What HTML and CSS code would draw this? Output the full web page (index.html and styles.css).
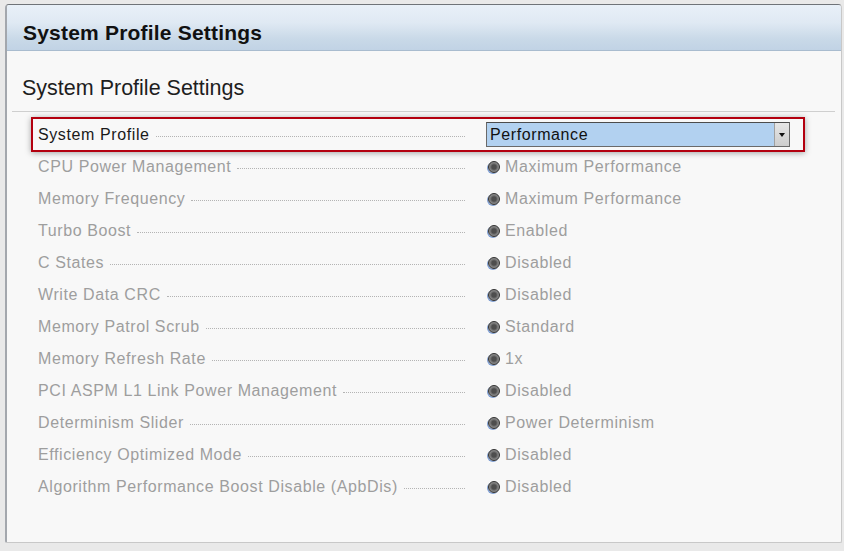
FILE: index.html
```html
<!DOCTYPE html>
<html lang="en">
<head>
  <meta charset="UTF-8" />
  <title>System Profile Settings</title>
  <link rel="stylesheet" href="styles.css">
</head>
<body>

<div class="panel">
  <div class="panel-header">System Profile Settings</div>

  <div class="panel-body">
    <h2 class="section-title">System Profile Settings</h2>
    <div class="divider"></div>

    <div class="settings">
      <div class="row selected">
        <div class="label"><span>System Profile</span><span class="dots"></span></div>
        <div class="value">
          <div class="select">
            <span class="select-text">Performance</span>
            <span class="select-btn"><span class="arrow"></span></span>
          </div>
        </div>
      </div>

      <div class="row">
        <div class="label"><span>CPU Power Management</span><span class="dots"></span></div>
        <div class="value"><span class="radio"></span>Maximum Performance</div>
      </div>
      <div class="row">
        <div class="label"><span>Memory Frequency</span><span class="dots"></span></div>
        <div class="value"><span class="radio"></span>Maximum Performance</div>
      </div>
      <div class="row">
        <div class="label"><span>Turbo Boost</span><span class="dots"></span></div>
        <div class="value"><span class="radio"></span>Enabled</div>
      </div>
      <div class="row">
        <div class="label"><span>C States</span><span class="dots"></span></div>
        <div class="value"><span class="radio"></span>Disabled</div>
      </div>
      <div class="row">
        <div class="label"><span>Write Data CRC</span><span class="dots"></span></div>
        <div class="value"><span class="radio"></span>Disabled</div>
      </div>
      <div class="row">
        <div class="label"><span>Memory Patrol Scrub</span><span class="dots"></span></div>
        <div class="value"><span class="radio"></span>Standard</div>
      </div>
      <div class="row">
        <div class="label"><span>Memory Refresh Rate</span><span class="dots"></span></div>
        <div class="value"><span class="radio"></span>1x</div>
      </div>
      <div class="row">
        <div class="label"><span>PCI ASPM L1 Link Power Management</span><span class="dots"></span></div>
        <div class="value"><span class="radio"></span>Disabled</div>
      </div>
      <div class="row">
        <div class="label"><span>Determinism Slider</span><span class="dots"></span></div>
        <div class="value"><span class="radio"></span>Power Determinism</div>
      </div>
      <div class="row">
        <div class="label"><span>Efficiency Optimized Mode</span><span class="dots"></span></div>
        <div class="value"><span class="radio"></span>Disabled</div>
      </div>
      <div class="row">
        <div class="label"><span>Algorithm Performance Boost Disable (ApbDis)</span><span class="dots"></span></div>
        <div class="value"><span class="radio"></span>Disabled</div>
      </div>
    </div>
  </div>
</div>

</body>
</html>
```

FILE: styles.css
```css
body {
  margin: 0;
  font-family: "Liberation Sans", Arial, sans-serif;
  background: #e9e9e9;
  color: #1a1a1a;
}

.panel {
  box-sizing: border-box;
  margin: 4px 2px 0 5px;
  height: 539px;
  background: #f8f8f8;
  border: 1px solid #c8c8c8;
  border-top: 1px solid #6f7378;
  border-left: 2px solid #a3a7ad;
  border-radius: 4px 4px 2px 2px;
  overflow: hidden;
}

.panel-header {
  box-sizing: border-box;
  height: 46px;
  padding: 16px 16px 0;
  line-height: 24px;
  font-size: 21px;
  font-weight: bold;
  letter-spacing: 0.2px;
  color: #111;
  background: linear-gradient(#e8f0f8 0%, #dfe9f3 40%, #c9d9e8 75%, #c1d3e5 100%);
  border-bottom: 1px solid #a9bccf;
}

.section-title {
  margin: 24px 0 0 15px;
  font-size: 21.5px;
  line-height: 26px;
  font-weight: normal;
  color: #1e1e1e;
}

.divider {
  margin: 10px 6px 0 5px;
  border-top: 1px solid #cfcfcf;
}

.settings {
  margin: 5px 36px 0 24px;
}

.row {
  box-sizing: border-box;
  display: grid;
  grid-template-columns: 427px 1fr;
  column-gap: 21px;
  height: 32px;
  line-height: 29px;
  padding: 0 0 3px 5px;
  border: 2px solid transparent;
  border-top: 0;
  border-bottom: 0;
  font-size: 16px;
  letter-spacing: 0.6px;
  color: #9e9e9e;
}

.row.selected {
  height: 35px;
  padding-bottom: 0;
  border: 2px solid #b3000f;
  box-shadow: 0 1px 6px rgba(0, 0, 0, 0.35);
  color: #1a1a1a;
}

.label {
  display: flex;
  align-items: center;
  white-space: nowrap;
}

.dots {
  flex: 1;
  height: 0;
  margin: 4px 0 0 6px;
  border-top: 1px dotted #b4b4b4;
}

.value {
  display: flex;
  align-items: center;
}

.radio {
  box-sizing: border-box;
  width: 12px;
  height: 12px;
  margin: 1px 5px 0 2px;
  border-radius: 50%;
  border: 1px solid #2f2f2f;
  background: radial-gradient(circle, #4e4e4e 0 30%, #7d7d7d 55%, #a9a9a9 100%);
  box-shadow: -1px 1px 0 #7d9dd2;
}

.select {
  box-sizing: border-box;
  display: flex;
  width: 304px;
  height: 25px;
  border: 1px solid #6a6a6a;
  border-top-color: #4c4c4c;
  background: #b2d1f0;
}

.select-text {
  flex: 1;
  padding-left: 3px;
  line-height: 23px;
  color: #111;
}

.select-btn {
  display: flex;
  align-items: center;
  justify-content: center;
  width: 14px;
  background: linear-gradient(#e6e6e6, #cdcdcd);
  border-left: 1px solid #a0a0a0;
}

.arrow {
  width: 0;
  height: 0;
  border-left: 3px solid transparent;
  border-right: 3px solid transparent;
  border-top: 4px solid #111;
}
```
